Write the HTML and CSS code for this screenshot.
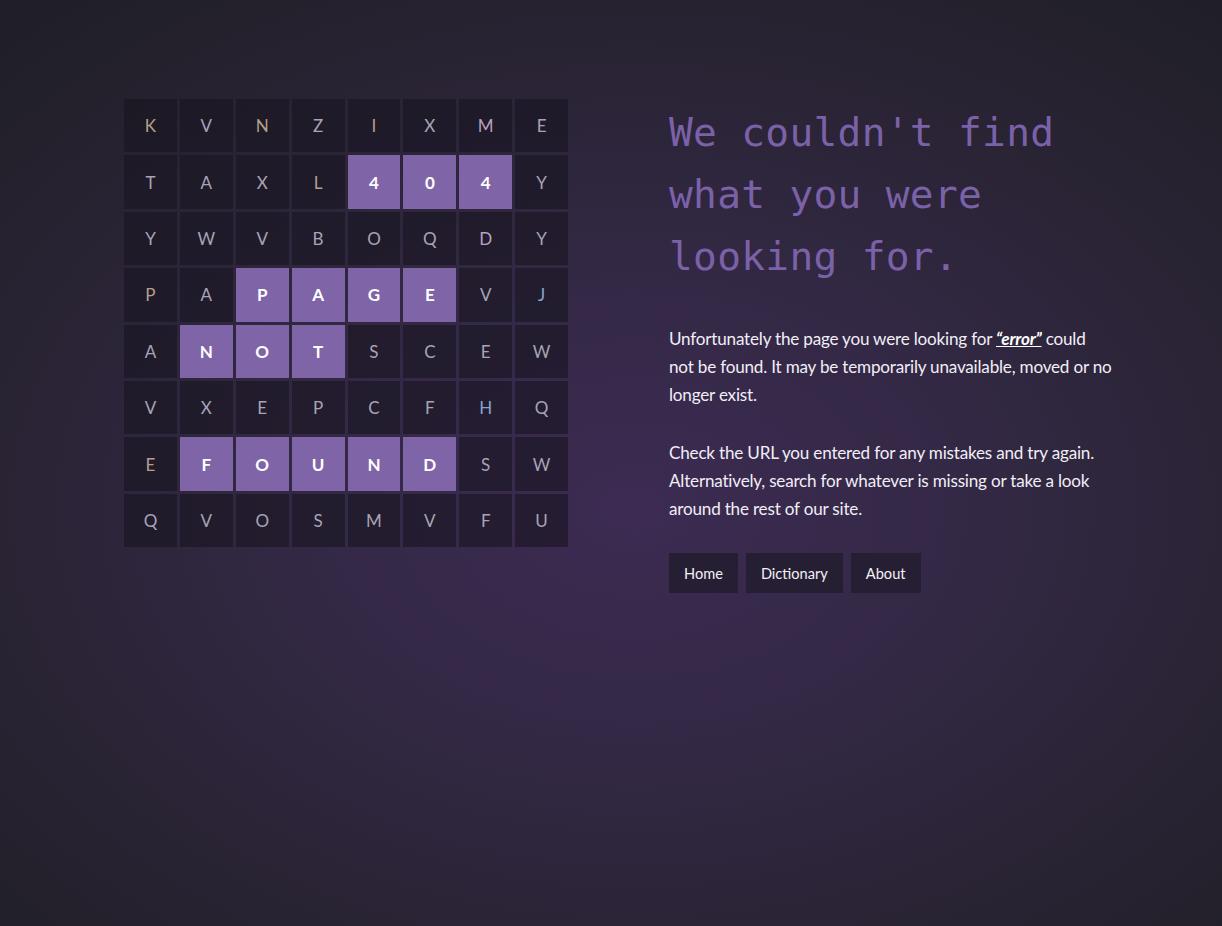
FILE: index.html
```html
<!DOCTYPE html>
<html lang="en">
<head>
<meta charset="utf-8">
<title>Page not found</title>
<link rel="stylesheet" href="styles.css">
</head>
<body>
<main class="page">
  <div class="board">
    <span class="cell warm">K</span><span class="cell">V</span><span class="cell warm">N</span><span class="cell">Z</span><span class="cell warm">I</span><span class="cell">X</span><span class="cell pink">M</span><span class="cell">E</span>
    <span class="cell">T</span><span class="cell">A</span><span class="cell">X</span><span class="cell warm">L</span><span class="cell hit">4</span><span class="cell hit">0</span><span class="cell hit">4</span><span class="cell">Y</span>
    <span class="cell">Y</span><span class="cell">W</span><span class="cell">V</span><span class="cell">B</span><span class="cell">O</span><span class="cell">Q</span><span class="cell pink">D</span><span class="cell">Y</span>
    <span class="cell warm">P</span><span class="cell">A</span><span class="cell hit">P</span><span class="cell hit">A</span><span class="cell hit">G</span><span class="cell hit">E</span><span class="cell">V</span><span class="cell blue">J</span>
    <span class="cell">A</span><span class="cell hit">N</span><span class="cell hit">O</span><span class="cell hit">T</span><span class="cell">S</span><span class="cell">C</span><span class="cell">E</span><span class="cell">W</span>
    <span class="cell">V</span><span class="cell">X</span><span class="cell">E</span><span class="cell">P</span><span class="cell">C</span><span class="cell">F</span><span class="cell blue">H</span><span class="cell">Q</span>
    <span class="cell warm">E</span><span class="cell hit">F</span><span class="cell hit">O</span><span class="cell hit">U</span><span class="cell hit">N</span><span class="cell hit">D</span><span class="cell">S</span><span class="cell">W</span>
    <span class="cell">Q</span><span class="cell">V</span><span class="cell">O</span><span class="cell">S</span><span class="cell">M</span><span class="cell">V</span><span class="cell">F</span><span class="cell">U</span>
  </div>
  <section class="message">
    <h1 class="title">We couldn't find what you were looking for.</h1>
    <p class="text">Unfortunately the page you were looking for <a class="missing" href="#">“error”</a> could not&nbsp;be found. It may be temporarily unavailable, moved or no longer exist.</p>
    <p class="text">Check the URL you entered for any mistakes and try again. Alternatively, search for whatever is missing or take a look around the rest of our site.</p>
    <nav class="links">
      <a class="btn" href="#">Home</a>
      <a class="btn" href="#">Dictionary</a>
      <a class="btn" href="#">About</a>
    </nav>
  </section>
</main>
</body>
</html>
```

FILE: styles.css
```css
html, body {
  margin: 0;
  height: 100%;
}

body {
  min-height: 926px;
  background: radial-gradient(ellipse 75% 70% at 52% 55%, #3d2b53 0%, #322843 40%, #26222f 80%, #201f29 100%);
  font-family: Lato, "Open Sans", sans-serif;
  color: #f1eef6;
}

.page {
  display: flex;
  align-items: flex-start;
  gap: 101px;
  padding: 99px 0 0 124px;
}

.board {
  display: grid;
  width: 444px;
  grid-template-columns: repeat(8, 1fr);
  grid-auto-rows: 53.4px;
  gap: 3px;
  flex: none;
}

.cell {
  display: flex;
  align-items: center;
  justify-content: center;
  background: rgba(24, 20, 32, 0.6);
  color: #a8a4b6;
  font-size: 17px;
  font-weight: 400;
}

.cell.warm { color: #b4a08c; }
.cell.blue { color: #86a6cc; }
.cell.pink { color: #b7a2bf; }

.cell.hit {
  background: #8064a8;
  color: #ffffff;
  font-weight: 700;
}

.message {
  width: 447px;
}

.title {
  margin: 2px 0 0;
  font-family: "DejaVu Sans Mono", "Liberation Mono", monospace;
  font-weight: 400;
  font-size: 39.5px;
  line-height: 62px;
  color: #7b61a8;
  letter-spacing: 0.3px;
}

.text {
  margin: 38px 0 0;
  font-size: 17.1px;
  line-height: 28px;
  letter-spacing: -0.2px;
}

.text + .text {
  margin-top: 30px;
}

.missing {
  color: #ffffff;
  font-weight: 700;
  font-style: italic;
  text-decoration: underline;
}

.links {
  display: flex;
  gap: 8px;
  margin-top: 30px;
}

.btn {
  display: flex;
  align-items: center;
  height: 40px;
  padding: 0 15px;
  background: #261f33;
  color: #f3f0f7;
  font-size: 14.6px;
  text-decoration: none;
}
```
